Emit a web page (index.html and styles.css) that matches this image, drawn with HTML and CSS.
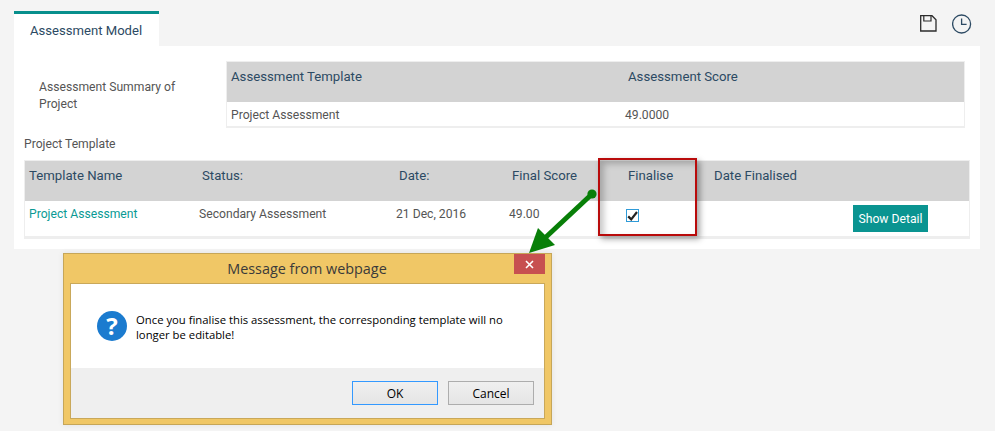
FILE: index.html
```html
<!DOCTYPE html>
<html lang="en">
<head>
<meta charset="utf-8">
<title>Assessment Model</title>
<link rel="stylesheet" href="styles.css">
</head>
<body>
<div class="page">
  <div class="topbar">
    <div class="tab">Assessment Model</div>
    <div class="tools">
      <svg class="icon icon-save" width="17" height="17" viewBox="0 0 17 17" aria-label="Save"><path d="M.7 .7H12L16 4.7V16H.7Z" fill="none" stroke="#2b2b2b" stroke-width="1.3"/><path d="M3.8 .7V6H11V.7" fill="none" stroke="#2b2b2b" stroke-width="1.2"/></svg>
      <svg class="icon" width="20" height="20" viewBox="0 0 20 20" aria-label="History"><circle cx="9.6" cy="10" r="9" fill="none" stroke="#2c4a63" stroke-width="1.3"/><path d="M9.6 4.6V10.4H14.6" fill="none" stroke="#2c4a63" stroke-width="1.3"/></svg>
    </div>
  </div>
  <main class="panel">
    <section class="summary">
      <p class="summary-label">Assessment Summary of Project</p>
      <table class="grid grid-summary">
        <colgroup><col class="s1"><col class="s2"></colgroup>
        <thead><tr><th>Assessment Template</th><th>Assessment Score</th></tr></thead>
        <tbody><tr><td>Project Assessment</td><td>49.0000</td></tr></tbody>
      </table>
    </section>
    <p class="section-label">Project Template</p>
    <table class="grid grid-template">
      <colgroup><col class="t1"><col class="t2"><col class="t3"><col class="t4"><col class="t5"><col class="t6"><col class="t7"></colgroup>
      <thead><tr><th>Template Name</th><th>Status:</th><th>Date:</th><th>Final Score</th><th>Finalise</th><th>Date Finalised</th><th></th></tr></thead>
      <tbody><tr>
        <td><a class="link" href="#">Project Assessment</a></td>
        <td>Secondary Assessment</td>
        <td>21 Dec, 2016</td>
        <td>49.00</td>
        <td><span class="check"><svg width="11" height="10" viewBox="0 0 11 10"><path d="M1.2 5.4L4.2 8.4L10 1" fill="none" stroke="#222" stroke-width="2.2"/></svg></span></td>
        <td></td>
        <td class="cell-action"><button class="detail">Show Detail</button></td>
      </tr></tbody>
    </table>
  </main>
</div>

<div class="callout"></div>
<svg class="arrow" width="80" height="75" viewBox="0 0 80 75">
  <circle cx="72" cy="9" r="4.6" fill="#087f08"/>
  <path d="M72 9L26 52" stroke="#087f08" stroke-width="5"/>
  <path d="M9 68L18 43L35 60Z" fill="#087f08"/>
</svg>

<div class="dialog">
  <div class="dialog-title">
    <span>Message from webpage</span>
    <span class="close"><svg width="9" height="9" viewBox="0 0 9 9"><path d="M1 1L8 8M8 1L1 8" stroke="#fff" stroke-width="1.6"/></svg></span>
  </div>
  <div class="dialog-body">
    <div class="message">
      <span class="question">?</span>
      <p>Once you finalise this assessment, the corresponding template will no longer be editable!</p>
    </div>
    <div class="actions">
      <button class="win-btn default">OK</button>
      <button class="win-btn">Cancel</button>
    </div>
  </div>
</div>
</body>
</html>
```
FILE: styles.css
```css
* { box-sizing: border-box; }
html, body { margin: 0; height: 100%; }
body {
  position: relative;
  width: 995px;
  height: 431px;
  overflow: hidden;
  background: #f4f4f4;
  font-family: Roboto, "Liberation Sans", sans-serif;
  font-size: 12.15px;
  color: #555;
}
.page { padding: 11px 15px 0 14px; }
.topbar { display: flex; justify-content: space-between; align-items: flex-start; height: 35px; }
.tab {
  width: 145px;
  height: 35px;
  background: #fff;
  border-top: 3px solid #078f8c;
  padding: 9px 0 0 16px;
  font-size: 13.1px;
  color: #2c4a63;
}
.tools { display: flex; align-items: flex-start; gap: 15px; padding: 3px 8px 0 0; }
.icon { display: block; }
.icon-save { margin-top: 1px; }
.panel { height: 203px; background: #fff; padding: 15px 10px 0; }
.summary { display: flex; align-items: flex-start; padding-left: 15px; }
.summary-label { margin: 18px 0 0; width: 187px; line-height: 17px; padding-right: 30px; }
.grid { border-collapse: separate; border-spacing: 0; table-layout: fixed; border: 1px solid #eee; border-bottom-width: 2px; }
.grid th { background: #d3d3d3; font-weight: 400; text-align: left; vertical-align: top; color: #2c4a63; font-size: 13.2px; }
.grid td { background: #fff; vertical-align: top; }
.grid-summary { width: 739px; }
.s1 { width: 397px; }
.s2 { width: 340px; }
.grid-summary th { height: 40px; padding: 7px 4px 0; }
.grid-summary td { height: 24px; padding: 6px 4px 0; }
.grid-summary td + td { padding-left: 1px; }
.section-label { margin: 9px 0 8px; line-height: 15px; }
.grid-template { width: 946px; border-bottom-width: 3px; }
.t1 { width: 172px; }
.t2 { width: 197px; }
.t3 { width: 113px; }
.t4 { width: 116px; }
.t5 { width: 86px; }
.t6 { width: 142px; }
.t7 { width: 118px; }
.grid-template th { height: 40px; padding: 7px 5px 0; }
.grid-template th:first-child { padding-left: 4px; }
.grid-template td { height: 35px; padding: 6px 2px 0; }
.grid-template td:first-child { padding-left: 4px; }
.grid-template .cell-action { padding-top: 4px; }
.link { color: #0a9a94; text-decoration: none; }
.check {
  display: flex;
  align-items: center;
  justify-content: center;
  width: 13px;
  height: 13px;
  margin: 2px 0 0 1px;
  border: 1px solid #2f9bd8;
  background: #fff;
}
.detail {
  display: block;
  width: 75px;
  height: 27px;
  border: 0;
  padding: 0;
  background: #0a9491;
  color: #fff;
  font: 12.2px Roboto, "Liberation Sans", sans-serif;
}
.callout {
  position: absolute;
  left: 598px;
  top: 158px;
  width: 99px;
  height: 78px;
  border: 2px solid #b90b0b;
  box-shadow: 3px 3px 6px rgba(0,0,0,.35), inset 4px 4px 6px rgba(0,0,0,.22);
}
.arrow { position: absolute; left: 520px; top: 185px; z-index: 2; }
.dialog {
  position: absolute;
  left: 63px;
  top: 253px;
  width: 489px;
  height: 172px;
  background: #f0c766;
  border: 1px solid #c6a658;
  padding: 0 6px 6px;
  box-shadow: 0 0 6px rgba(0,0,0,.08);
  font-family: "Open Sans", "Noto Sans", sans-serif;
  color: #000;
}
.dialog-title {
  position: relative;
  height: 29px;
  padding: 4px 1px 0 0;
  text-align: center;
  font-size: 14.4px;
  line-height: 22px;
  color: #3a3a3a;
}
.close {
  position: absolute;
  right: 0;
  top: 0;
  width: 31px;
  height: 20px;
  display: flex;
  align-items: center;
  justify-content: center;
  background: #c75050;
}
.dialog-body {
  height: 136px;
  background: #efefef;
  border: 1px solid #c9a85a;
  display: flex;
  flex-direction: column;
}
.message {
  height: 84px;
  background: #fff;
  display: flex;
  align-items: flex-start;
  padding: 27px 10px 0 26px;
  gap: 9px;
}
.question {
  flex: none;
  width: 30px;
  height: 30px;
  border-radius: 50%;
  background: #1b7bcf;
  color: #fff;
  font-size: 24px;
  font-weight: 700;
  line-height: 30px;
  text-align: center;
}
.message p { margin: 0; font-size: 11.3px; line-height: 15px; padding-top: 1px; }
.actions { display: flex; justify-content: flex-end; gap: 10px; padding: 13px 10px 0 0; }
.win-btn {
  width: 86px;
  height: 24px;
  padding: 0;
  border: 1px solid #adadad;
  background: linear-gradient(#f0f0f0, #e5e5e5);
  color: #000;
  font: 12px "Open Sans", "Noto Sans", sans-serif;
}
.win-btn.default { border-color: #3399ff; }
```
